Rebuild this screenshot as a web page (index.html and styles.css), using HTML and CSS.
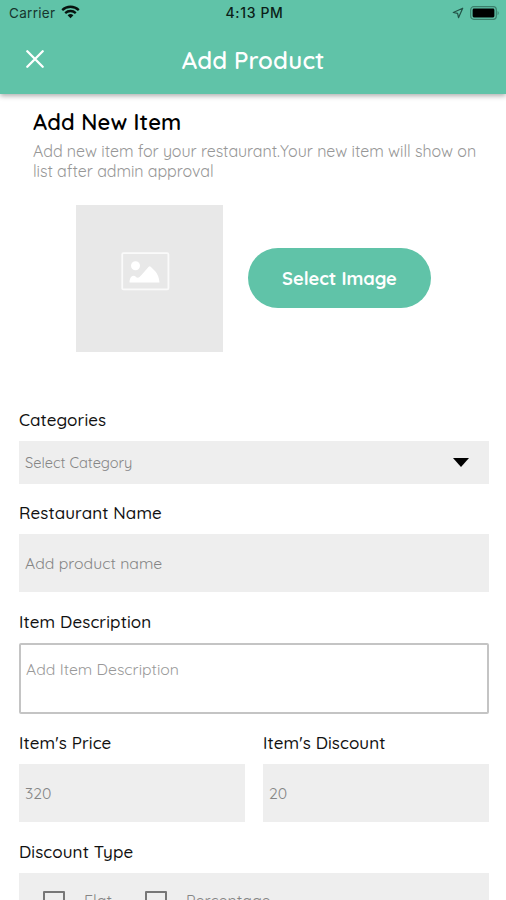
FILE: index.html
```html
<!DOCTYPE html>
<html lang="en">
<head>
<meta charset="utf-8">
<title>Add Product</title>
<link rel="stylesheet" href="styles.css">
</head>
<body>
<header class="header">
  <div class="status">
    <div class="carrier"><span>Carrier</span>
      <svg width="19" height="14" viewBox="0 0 19 14" fill="none" stroke="#07130f" stroke-width="2.3"><path d="M1.2 5.1a12 12 0 0 1 16.6 0M4.2 8.1a7.7 7.7 0 0 1 10.6 0"/><path d="M6.6 10.3a4.2 4.2 0 0 1 5.8 0L9.5 13.2z" fill="#07130f" stroke="none"/></svg>
    </div>
    <div class="time">4:13 PM</div>
    <div class="power">
      <svg width="12" height="12" viewBox="0 0 12 12" fill="none" stroke="#235347" stroke-width="1.2" stroke-linejoin="round"><path d="M10.7 1.2L1.3 5.5l4.3.9.9 4.3z"/></svg>
      <svg width="30" height="14" viewBox="0 0 30 14"><rect x=".7" y=".7" width="25.6" height="12.6" rx="3" fill="none" stroke="#3a7f6b" stroke-width="1.2"/><rect x="2.6" y="2.6" width="21.8" height="8.8" rx="1.3" fill="#000"/><path d="M27.6 4.7q2.2 2.3 0 4.6z" fill="#3a7f6b"/></svg>
    </div>
  </div>
  <div class="bar">
    <svg class="close" width="18" height="18" viewBox="0 0 18 18" fill="none" stroke="#fff" stroke-width="2.3" stroke-linecap="round"><path d="M1.3 1.3l15.4 15.4M16.7 1.3L1.3 16.7"/></svg>
    <div class="bar-title">Add Product</div>
  </div>
</header>
<main class="page">
  <section class="intro">
    <h1>Add New Item</h1>
    <p>Add new item for your restaurant.Your new item will show on<br>list after admin approval</p>
  </section>
  <section class="upload">
    <div class="preview">
      <svg width="49" height="39" viewBox="0 0 49 39"><rect x="1.2" y="1.2" width="46.2" height="36.2" rx="1.2" fill="none" stroke="#fafafa" stroke-width="1.8"/><circle cx="14.5" cy="13.7" r="4.5" fill="#fff"/><path d="M8.500 30.500c0-3 1.300-6.700 4-6.700 2.200 0 2.500 2 4.200 2 1.300 0 2.300-1.300 3.800-2.800l7.200-8.300q1-1 2 0l4.300 4.300q3.800 4 4.500 11.500z" fill="#fff"/></svg>
    </div>
    <button class="select-image">Select Image</button>
  </section>
  <form class="form">
    <label>Categories</label>
    <div class="field select"><span>Select Category</span><i class="caret"></i></div>
    <label>Restaurant Name</label>
    <div class="field"><span>Add product name</span></div>
    <label>Item Description</label>
    <div class="field textarea"><span>Add Item Description</span></div>
    <div class="pair">
      <div><label>Item's Price</label><div class="field"><span>320</span></div></div>
      <div><label>Item's Discount</label><div class="field"><span>20</span></div></div>
    </div>
    <label>Discount Type</label>
    <div class="field options">
      <i class="check"></i><span class="flat">Flat</span>
      <i class="check"></i><span class="percentage">Percentage</span>
    </div>
  </form>
</main>
</body>
</html>
```
FILE: styles.css
```css
* { box-sizing: border-box; }
html, body { margin: 0; height: 900px; overflow: hidden; }
body { background: #fff; color: #111; font-family: Quicksand, Lato, sans-serif; }
svg { display: block; flex: none; }

.header { height: 94px; background: #60c3a8; box-shadow: 0 2px 5px rgba(0,0,0,.32); }
.status { display: grid; grid-template-columns: 1fr auto 1fr; align-items: center; height: 26px; padding: 0 6px 0 9px; font: 13.5px/26px Inter, sans-serif; color: #17352d; }
.carrier, .power { display: flex; align-items: center; }
.carrier { gap: 6px; letter-spacing: .3px; }
.carrier svg { margin-top: -2px; }
.time { font-weight: 500; font-size: 14px; letter-spacing: .65px; color: #0b1e18; }
.power { justify-content: flex-end; gap: 6px; }
.bar { display: grid; grid-template-columns: 60px 1fr 60px; align-items: center; height: 68px; }
.close { margin: 0 0 2px 26px; }
.bar-title { text-align: center; color: #fff; font-size: 24px; font-weight: 600; line-height: 30px; letter-spacing: .1px; }

.intro { padding: 14px 20px 0 33px; }
h1 { margin: 0; font-size: 22px; line-height: 28px; font-weight: 600; letter-spacing: .15px; color: #000; }
p { margin: 6px 0 0; font-size: 16px; line-height: 19.5px; letter-spacing: -.06px; color: #979797; white-space: nowrap; }
.upload { display: flex; align-items: center; gap: 25px; margin: 24px 0 0 76px; }
.preview { display: flex; justify-content: center; width: 147px; height: 147px; padding-top: 47px; padding-right: 9px; background: #e8e8e8; }
.select-image { width: 183px; height: 60px; margin-bottom: 2px; padding: 2px 0 0; border: 0; border-radius: 30px; background: #60c3a8; color: #fff; font: 700 18.3px Quicksand, Lato, sans-serif; }

.form { padding: 58px 17px 0 19px; }
label { display: block; margin: 0 0 11px; font-size: 17px; font-weight: 500; line-height: 20px; letter-spacing: .1px; white-space: nowrap; }
.field { display: flex; align-items: center; height: 58px; margin-bottom: 20px; padding: 0 6px; background: #eee; color: #858585; font-size: 15.8px; line-height: 20px; white-space: nowrap; }
.select { height: 43px; margin-bottom: 19px; padding-right: 20px; justify-content: space-between; font-size: 14.6px; }
.caret { border: 8px solid transparent; border-top: 9px solid #000; border-bottom: 0; }
.textarea { height: 71px; align-items: flex-start; margin-bottom: 19px; padding: 14px 5px 0; border: 2px solid #c4c4c4; border-radius: 2px; background: #fff; color: #999; }
.pair { display: grid; grid-template-columns: 1fr 1fr; gap: 18px; }
.options { padding: 0 24px; font-size: 16px; }
.options span { padding-bottom: 2px; }
.check { width: 22px; height: 22px; border: 2px solid #777; border-radius: 1px; }
.flat { width: 61px; margin-left: 19px; }
.percentage { margin-left: 19px; }
```
